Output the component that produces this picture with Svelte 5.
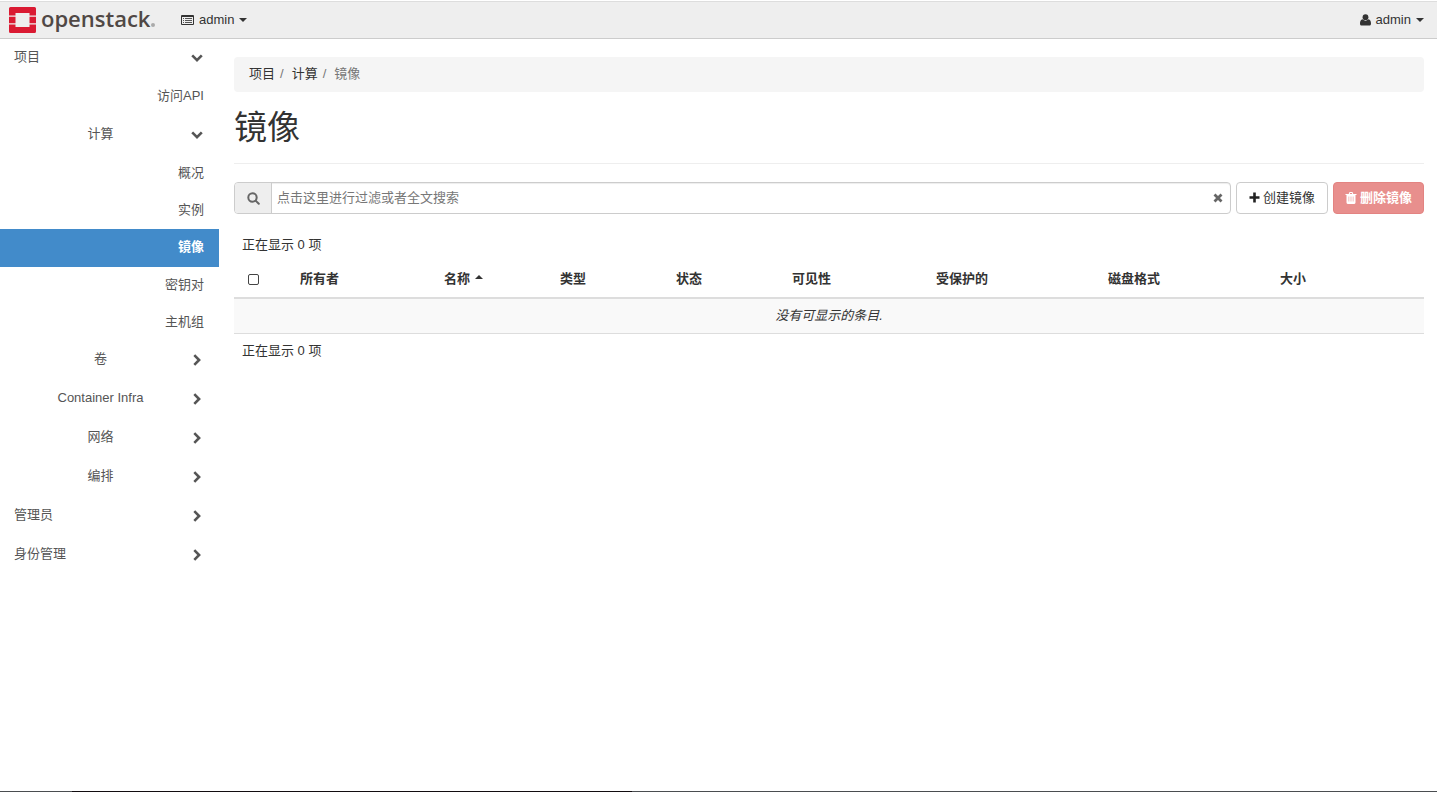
<script>
	let search = "";
	let allSelected = false;

	const menu = [
		{ label: "项目", level: 1, open: true },
		{ label: "访问API", level: 3, last: true },
		{ label: "计算", level: 2, open: true },
		{ label: "概况", level: 3 },
		{ label: "实例", level: 3 },
		{ label: "镜像", level: 3, active: true },
		{ label: "密钥对", level: 3 },
		{ label: "主机组", level: 3 },
		{ label: "卷", level: 2 },
		{ label: "Container Infra", level: 2 },
		{ label: "网络", level: 2 },
		{ label: "编排", level: 2 },
		{ label: "管理员", level: 1 },
		{ label: "身份管理", level: 1 },
	];

	const columns = [
		{ label: "所有者", width: 144 },
		{ label: "名称", width: 116, sorted: true },
		{ label: "类型", width: 116 },
		{ label: "状态", width: 116 },
		{ label: "可见性", width: 144 },
		{ label: "受保护的", width: 172 },
		{ label: "磁盘格式", width: 172 },
		{ label: "大小", width: 152 },
	];
</script>

<div class="page">
	<header class="navbar">
		<a class="brand" href="#home" aria-label="openstack">
			<svg width="27" height="26" viewBox="0 0 27 26" fill="#da1a32">
				<path d="M1.500 0h24A1.500 1.500 0 0 1 27 1.500v7h-6.500V6h-14v2.500H0v-7A1.500 1.500 0 0 1 1.500 0z" />
				<path d="M0 9.700h6.500v6.600H0zM20.500 9.700H27v6.600h-6.500z" />
				<path d="M0 17.500h6.500V20h14v-2.500H27v7a1.500 1.500 0 0 1-1.500 1.500h-24A1.500 1.500 0 0 1 0 24.500z" />
			</svg>
			<span class="brand-name">openstack</span><span class="dot"></span>
		</a>
		<button class="nav-button" type="button">
			<svg width="13" height="12" viewBox="0 0 13 12">
				<path fill="#333" fill-rule="evenodd" d="M1 1h11a1 1 0 0 1 1 1v8a1 1 0 0 1-1 1H1a1 1 0 0 1-1-1V2a1 1 0 0 1 1-1zM1 3v7h11V3z" />
				<path fill="#555" d="M2 4h1v1H2zM4 4h7v1H4zM2 6h1v1H2zM4 6h7v1H4zM2 8h1v1H2zM4 8h7v1H4z" />
			</svg>
			<span>admin</span>
			<span class="caret"></span>
		</button>
		<button class="nav-button user" type="button">
			<svg width="11" height="12" viewBox="0 0 11 12" fill="#333">
				<circle cx="5.500" cy="3.200" r="2.900" />
				<path d="M2.600 5.300Q5.500 8 8.400 5.300C10.300 5.500 11 7.500 11 9.700c0 1.200-.8 1.900-1.800 1.900H1.800C.8 11.600 0 10.900 0 9.700c0-2.200.7-4.200 2.600-4.400z" />
			</svg>
			<span>admin</span>
			<span class="caret"></span>
		</button>
	</header>

	<div class="content">
		<nav class="sidebar">
			{#each menu as item}
				{#if item.level === 3}
					<a class="leaf" class:active={item.active} class:last={item.last} href="#panel">{item.label}</a>
				{:else}
					<button class="group" class:sub={item.level === 2} type="button" aria-expanded={!!item.open}>
						<span class="group-label">{item.label}</span>
						<span class="chevron">
							{#if item.open}
								<svg width="12" height="8" viewBox="0 0 12 8"><path d="M1.200 1.300L6 6.100l4.800-4.800" /></svg>
							{:else}
								<svg width="8" height="12" viewBox="0 0 8 12"><path d="M1.300 1.200L6.100 6l-4.800 4.800" /></svg>
							{/if}
						</span>
					</button>
				{/if}
			{/each}
		</nav>

		<main>
			<ol class="breadcrumb">
				<li><a href="#project">项目</a></li>
				<li><a href="#compute">计算</a></li>
				<li class="current">镜像</li>
			</ol>

			<h1>镜像</h1>

			<div class="toolbar">
				<div class="search">
					<label class="search-icon" for="search" aria-label="搜索">
						<svg width="13" height="13" viewBox="0 0 13 13" fill="none" stroke="#666" stroke-width="2">
							<circle cx="5.500" cy="5.500" r="4.200" />
							<path d="M8.600 8.600l3.200 3.200" stroke-linecap="round" />
						</svg>
					</label>
					<input id="search" type="text" placeholder="点击这里进行过滤或者全文搜索" bind:value={search} />
					<button class="clear" type="button" aria-label="清除" on:click={() => (search = "")}>
						<svg width="10" height="10" viewBox="0 0 10 10"><path d="M1.500 1.500l7 7M8.500 1.500l-7 7" stroke="#666" stroke-width="2.800" /></svg>
					</button>
				</div>
				<button class="btn" type="button">
					<svg width="11" height="12" viewBox="0 0 11 12"><path d="M5.500 0.500v10M0.500 5.500h10" stroke="#222" stroke-width="2.600" /></svg>
					<span>创建镜像</span>
				</button>
				<button class="btn danger" type="button" disabled>
					<svg width="12" height="12" viewBox="0 0 12 12">
						<path fill="#fff" fill-rule="evenodd" d="M3.700 2l.5-1.400Q4.400 0 5 0h2q.6 0 .8.600L8.300 2H11.500v1h-1v7.600Q10.500 12 9.300 12H2.700q-1.200 0-1.200-1.400V3h-1V2zM4.800 2h2.400L6.900 1H5.100zM3.600 4.500v5h.6v-5zM5.700 4.500v5h.6v-5zM7.800 4.500v5h.6v-5z" />
					</svg>
					<span>删除镜像</span>
				</button>
			</div>

			<p class="count">正在显示 0 项</p>
			<table>
				<colgroup>
					<col style="width: 58px" />
					{#each columns as column}
						<col style="width: {column.width}px" />
					{/each}
				</colgroup>
				<thead>
					<tr>
						<th class="select"><input type="checkbox" aria-label="全选" bind:checked={allSelected} /></th>
						{#each columns as column}
							<th>{column.label}{#if column.sorted}<span class="caret up"></span>{/if}</th>
						{/each}
					</tr>
				</thead>
				<tbody>
					<tr>
						<td colspan="9">没有可显示的条目.</td>
					</tr>
				</tbody>
			</table>
			<p class="count">正在显示 0 项</p>
		</main>
	</div>
	<div class="bottom-edge"></div>
</div>

<style>
	:global(body) {
		background: #fff;
		color: #333;
		font-family: "Liberation Sans", "Noto Sans CJK SC", sans-serif;
		font-size: 13px;
		line-height: 18px;
	}

	* {
		box-sizing: border-box;
	}
	a {
		color: inherit;
		text-decoration: none;
	}
	button,
	input {
		font: inherit;
		color: inherit;
		margin: 0;
	}
	button {
		cursor: pointer;
	}
	svg {
		display: block;
		flex: none;
	}

	.page {
		display: flex;
		flex-direction: column;
		min-height: 100vh;
	}

	.navbar {
		display: flex;
		align-items: center;
		height: 38px;
		margin-top: 1px;
		padding: 0 13px 0 9px;
		background: #eee;
		border-top: 1px solid #ddd;
		border-bottom: 1px solid #ccc;
	}
	.brand {
		display: flex;
		align-items: center;
		gap: 5px;
		width: 172px;
	}
	.brand-name {
		color: #504845;
		font-family: "Open Sans", sans-serif;
		font-size: 22px;
		font-weight: 600;
		line-height: 26px;
		padding-bottom: 4px;
	}
	.dot {
		width: 4px;
		height: 4px;
		margin: 10px 0 0 -4px;
		border-radius: 2px;
		background: #aaa;
	}
	.nav-button {
		display: flex;
		align-items: center;
		gap: 5px;
		padding: 0;
		border: none;
		background: none;
	}
	.user {
		margin-left: auto;
	}
	.caret {
		border-top: 4px solid #333;
		border-left: 4px solid transparent;
		border-right: 4px solid transparent;
	}
	.up {
		display: inline-block;
		margin-left: 5px;
		vertical-align: 4px;
		border-top: none;
		border-bottom: 4px solid #333;
	}

	.content {
		display: flex;
		flex: 1;
	}
	.sidebar {
		flex: none;
		width: 219px;
		color: #555;
	}
	.group {
		display: flex;
		align-items: center;
		width: 100%;
		height: 39px;
		padding: 0 12px 4px 14px;
		border: none;
		background: none;
		text-align: left;
	}
	.group-label {
		flex: 1;
	}
	.sub .group-label {
		text-align: center;
	}
	.chevron {
		display: flex;
		justify-content: center;
		width: 20px;
		padding-top: 2px;
	}
	.chevron path {
		fill: none;
		stroke: #555;
		stroke-width: 2.6;
	}
	.leaf {
		display: block;
		height: 37px;
		padding: 9px 15px 0;
		text-align: right;
	}
	.last {
		height: 38px;
	}
	.active {
		height: 38px;
		background: #428bca;
		color: #fff;
		font-weight: bold;
	}

	main {
		flex: 1;
		min-width: 0;
		padding: 18px 13px 18px 15px;
	}
	.breadcrumb {
		display: flex;
		margin: 0;
		padding: 8px 15px 9px;
		list-style: none;
		background: #f5f5f5;
		border-radius: 4px;
	}
	.breadcrumb li + li::before {
		content: "/";
		padding: 0 8px 0 5px;
		color: #777;
	}
	.current {
		color: #777;
	}
	h1 {
		margin: 0 0 18px;
		padding: 18px 0 17px;
		border-bottom: 1px solid #eee;
		font-size: 33px;
		font-weight: normal;
		line-height: 36px;
	}

	.toolbar {
		display: flex;
		gap: 5px;
		height: 32px;
	}
	.search {
		display: flex;
		flex: 1;
		border: 1px solid #ccc;
		border-radius: 4px;
		overflow: hidden;
		box-shadow: inset 0 1px 1px rgba(0, 0, 0, 0.075);
	}
	.search-icon {
		display: flex;
		align-items: center;
		justify-content: center;
		width: 37px;
		background: #eee;
		border-right: 1px solid #ccc;
	}
	.search input {
		flex: 1;
		min-width: 0;
		padding: 0 5px;
		border: none;
		outline: none;
		background: transparent;
	}
	.search input::placeholder {
		color: #777;
	}
	.clear {
		display: flex;
		align-items: center;
		padding: 0 7px;
		border: none;
		background: none;
	}
	.btn {
		display: flex;
		align-items: center;
		gap: 3px;
		padding: 0 12px;
		border: 1px solid #ccc;
		border-radius: 4px;
		background: #fff;
		white-space: nowrap;
	}
	.danger {
		padding: 0 11px;
		border-color: #e38381;
		background: #e88f8d;
		color: #fff;
		font-weight: bold;
	}

	.count {
		margin: 0;
		padding: 8px;
	}
	.toolbar + .count {
		margin-top: 14px;
	}
	table {
		width: 100%;
		table-layout: fixed;
		border-collapse: collapse;
	}
	th {
		padding: 8px 8px 9px;
		border-bottom: 2px solid #ddd;
		text-align: left;
	}
	.select {
		padding-left: 14px;
	}
	.select input {
		display: block;
		appearance: none;
		width: 11px;
		height: 11px;
		border: 1px solid #444;
		border-radius: 2px;
		background: #fff;
	}
	.select input:checked {
		background: #428bca;
	}
	td {
		padding: 8px;
		border-bottom: 1px solid #ddd;
		background: #f9f9f9;
		font-style: italic;
		text-align: center;
	}

	.bottom-edge {
		height: 1px;
		background: linear-gradient(90deg, #4a4d50 5%, #120c10 5%, #120c10 44%, #4a4d50 44%);
	}
</style>
